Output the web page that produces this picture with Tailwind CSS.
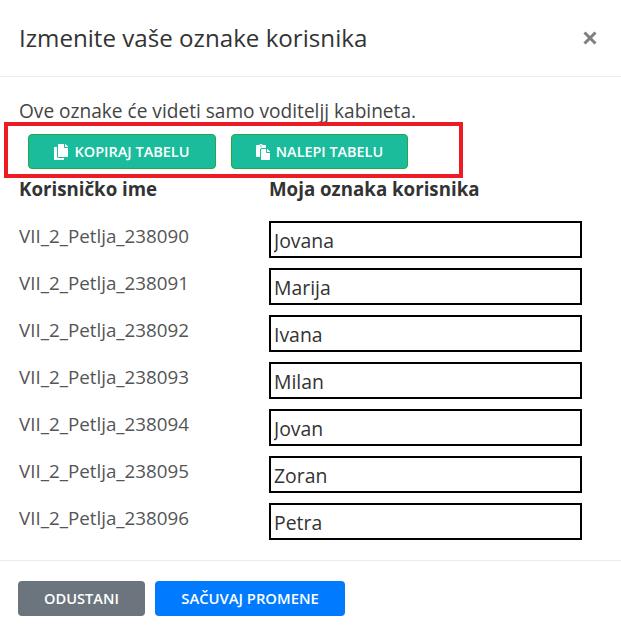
<!doctype html>
<html><head><meta charset="utf-8"><script src="https://cdn.jsdelivr.net/npm/@tailwindcss/browser@4"></script></head>
<body class="bg-white font-['Open_Sans','Noto_Sans',sans-serif] text-[#212529]">
<div class="relative w-[621px] h-[635px] overflow-hidden flex flex-col">
  <header class="h-[77px] shrink-0 border-b border-[#e9ecef] flex items-center justify-between pl-[19px] pr-[23px]">
    <h1 class="text-[24.15px] leading-[26px] text-[#333] font-normal">Izmenite vaše oznake korisnika</h1>
    <svg class="w-[16px] h-[16px]" viewBox="0 0 16 16"><path d="M2.5 2.5L13.5 13.5M13.5 2.5L2.5 13.5" stroke="#7f7f7f" stroke-width="3"/></svg>
  </header>
  <main class="flex-1 pl-[19px] pt-[22px]">
    <p class="text-[19.1px] leading-[24px] text-[#444]">Ove oznake će videti samo voditeljj kabineta.</p>
    <div class="flex gap-[15px] pl-[9px] mt-[11px]">
      <button class="w-[188px] h-[35px] rounded-[4px] bg-[#1abc9c] border border-[#28a745] text-white text-[14.5px] font-semibold flex items-center justify-center gap-[6px]">
        <svg class="w-[14px] h-[16px]" viewBox="0 0 448 512"><path fill="#fff" d="M320 448v40c0 13.255-10.745 24-24 24H24c-13.255 0-24-10.745-24-24V120c0-13.255 10.745-24 24-24h72v296c0 30.879 25.121 56 56 56h168zm0-344V0H152c-13.255 0-24 10.745-24 24v368c0 13.255 10.745 24 24 24h272c13.255 0 24-10.745 24-24V128H344c-13.2 0-24-10.8-24-24zm120.971-31.029L375.029 7.029A24 24 0 0 0 358.059 0H352v96h96v-6.059a24 24 0 0 0-7.029-16.97z"/></svg>KOPIRAJ TABELU</button>
      <button class="w-[177px] h-[35px] rounded-[4px] bg-[#1abc9c] border border-[#28a745] text-white text-[14.4px] font-semibold flex items-center justify-center gap-[6px]">
        <svg class="w-[14px] h-[16px]" viewBox="0 0 448 512"><path fill="#fff" d="M128 184c0-30.879 25.122-56 56-56h136V56c0-13.255-10.745-24-24-24h-80.61C204.306 12.89 183.637 0 160 0s-44.306 12.89-55.39 32H24C10.745 32 0 42.745 0 56v336c0 13.255 10.745 24 24 24h104V184zm32-144c13.255 0 24 10.745 24 24s-10.745 24-24 24-24-10.745-24-24 10.745-24 24-24zm184 248h104v200c0 13.255-10.745 24-24 24H184c-13.255 0-24-10.745-24-24V184c0-13.255 10.745-24 24-24h136v104c0 13.2 10.8 24 24 24zm104-38.059V256h-96v-96h6.059a24 24 0 0 1 16.97 7.029l65.941 65.941a24.002 24.002 0 0 1 7.03 16.971z"/></svg>NALEPI TABELU</button>
    </div>
    <div class="grid grid-cols-[250px_313px] mt-[8px] text-[#333]">
      <div class="text-[18.7px] leading-[24px] font-bold">Korisničko ime</div>
      <div class="text-[18.7px] leading-[24px] font-bold">Moja oznaka korisnika</div>
    </div>
    <div class="flex flex-col gap-[10px] mt-[20px]">
      <div class="flex h-[37px]"><span class="w-[250px] text-[18.8px] leading-[24px] text-[#555] pt-[3px]">VII_2_Petlja_238090</span><input value="Jovana" class="w-[313px] h-[37px] border-2 border-black px-[3px] pt-[1px] text-[19.4px] text-[#333] rounded-none"></div>
      <div class="flex h-[37px]"><span class="w-[250px] text-[18.8px] leading-[24px] text-[#555] pt-[3px]">VII_2_Petlja_238091</span><input value="Marija" class="w-[313px] h-[37px] border-2 border-black px-[3px] pt-[1px] text-[19.4px] text-[#333] rounded-none"></div>
      <div class="flex h-[37px]"><span class="w-[250px] text-[18.8px] leading-[24px] text-[#555] pt-[3px]">VII_2_Petlja_238092</span><input value="Ivana" class="w-[313px] h-[37px] border-2 border-black px-[3px] pt-[1px] text-[19.4px] text-[#333] rounded-none"></div>
      <div class="flex h-[37px]"><span class="w-[250px] text-[18.8px] leading-[24px] text-[#555] pt-[3px]">VII_2_Petlja_238093</span><input value="Milan" class="w-[313px] h-[37px] border-2 border-black px-[3px] pt-[1px] text-[19.4px] text-[#333] rounded-none"></div>
      <div class="flex h-[37px]"><span class="w-[250px] text-[18.8px] leading-[24px] text-[#555] pt-[3px]">VII_2_Petlja_238094</span><input value="Jovan" class="w-[313px] h-[37px] border-2 border-black px-[3px] pt-[1px] text-[19.4px] text-[#333] rounded-none"></div>
      <div class="flex h-[37px]"><span class="w-[250px] text-[18.8px] leading-[24px] text-[#555] pt-[3px]">VII_2_Petlja_238095</span><input value="Zoran" class="w-[313px] h-[37px] border-2 border-black px-[3px] pt-[1px] text-[19.4px] text-[#333] rounded-none"></div>
      <div class="flex h-[37px]"><span class="w-[250px] text-[18.8px] leading-[24px] text-[#555] pt-[3px]">VII_2_Petlja_238096</span><input value="Petra" class="w-[313px] h-[37px] border-2 border-black px-[3px] pt-[1px] text-[19.4px] text-[#333] rounded-none"></div>
    </div>
  </main>
  <footer class="h-[75px] shrink-0 border-t border-[#e9ecef] flex items-start pl-[18px] pt-[20px] gap-[10px]">
    <button class="w-[127px] h-[35px] rounded-[4px] bg-[#6c757d] text-white text-[14.6px] font-semibold">ODUSTANI</button>
    <button class="w-[190px] h-[35px] rounded-[4px] bg-[#007bff] text-white text-[14.8px] font-semibold">SAČUVAJ PROMENE</button>
  </footer>
  <div class="absolute left-[4px] top-[122px] w-[459px] h-[56px] border-4 border-[#ed1c24] pointer-events-none"></div>
</div>
</body></html>
